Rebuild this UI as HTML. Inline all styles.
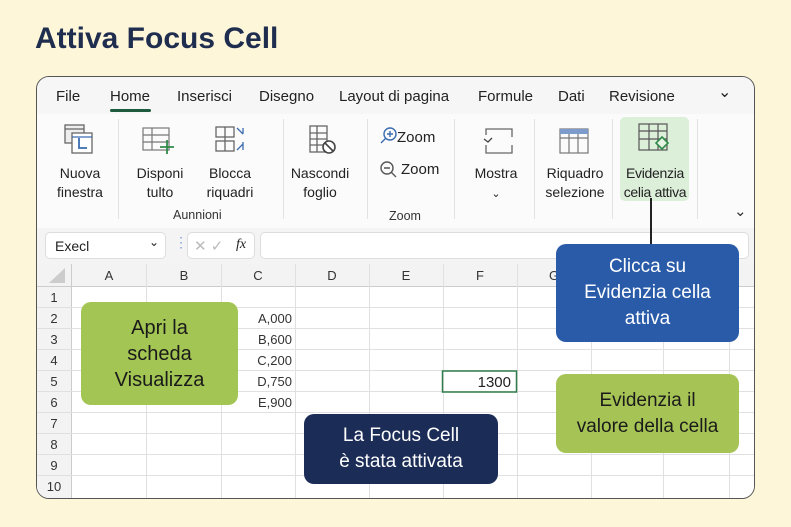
<!DOCTYPE html>
<html><head><meta charset="utf-8"><style>
*{margin:0;padding:0;box-sizing:border-box}
body{width:791px;height:527px;background:#fdf6d9;font-family:"Liberation Sans",sans-serif;position:relative;overflow:hidden;color:#222}
.abs{position:absolute}
h1{position:absolute;left:35px;top:22px;font-size:30px;font-weight:bold;color:#1f2d4f}
.win{position:absolute;left:36px;top:76px;width:719px;height:423px;background:#fff;border:1.5px solid #555;border-radius:13px;overflow:hidden}
.tabs{position:absolute;left:0;top:0;width:100%;height:37px;background:#f6f6f6}
.tab{position:absolute;top:11px;font-size:15px;color:#222}
.ribbon{position:absolute;left:0;top:37px;width:100%;height:114px;background:#fbfbfb}
.lbl{position:absolute;font-size:14px;text-align:center;line-height:19px;color:#222}
.sep{position:absolute;top:42px;width:1px;height:100px;background:#e2e2e2}
.grp{position:absolute;font-size:12.5px;color:#333}
.fbar{position:absolute;left:0;top:151px;width:100%;height:36px;background:#f4f4f4}
.box{position:absolute;background:#fff;border:1px solid #ddd;border-radius:5px}
.grid{position:absolute;left:0;top:187px;width:100%;height:236px;background:#fff}
.co{position:absolute;border-radius:10px;text-align:center;font-size:19px;line-height:26px;display:flex;align-items:center;justify-content:center}
</style></head><body>
<h1>Attiva Focus Cell</h1>
<div class="win">
 <div class="tabs">
  <span class="tab" style="left:19px">File</span>
  <span class="tab" style="left:73px">Home</span>
  <div class="abs" style="left:73px;top:32px;width:41px;height:3px;background:#1e5a3d;border-radius:2px"></div>
  <span class="tab" style="left:140px">Inserisci</span>
  <span class="tab" style="left:222px">Disegno</span>
  <span class="tab" style="left:302px">Layout di pagina</span>
  <span class="tab" style="left:441px">Formule</span>
  <span class="tab" style="left:521px">Dati</span>
  <span class="tab" style="left:572px">Revisione</span>
  <span class="tab" style="left:681px;top:5px;font-size:16px">&#8964;</span>
 </div>
 <div class="ribbon">
  <div class="abs" style="left:583px;top:3px;width:69px;height:84px;background:#dcefd9;border-radius:5px"></div>
  <!-- icons -->
  <svg class="abs" style="left:26px;top:9px" width="32" height="32" viewBox="0 0 32 32" fill="none" stroke="#666" stroke-width="1.3"><rect x="2" y="2" width="19" height="18" fill="#eee"/><line x1="2" y1="6" x2="21" y2="6"/><rect x="9" y="10" width="20" height="20" fill="#fff"/><path d="M16 15v10h8" stroke="#3a6cb0" stroke-width="1.8"/><line x1="9" y1="14" x2="29" y2="14" stroke="#3a6cb0"/></svg>
  <svg class="abs" style="left:104px;top:12px" width="34" height="30" viewBox="0 0 34 30" fill="none" stroke="#777" stroke-width="1.2"><rect x="2" y="2" width="26" height="22"/><line x1="2" y1="9" x2="28" y2="9"/><line x1="2" y1="16" x2="28" y2="16"/><line x1="11" y1="2" x2="11" y2="24"/><path d="M26 14v14M19 21h14" stroke="#2f8a4a" stroke-width="1.8"/></svg>
  <svg class="abs" style="left:177px;top:10px" width="32" height="32" viewBox="0 0 32 32" fill="none" stroke="#666" stroke-width="1.3"><rect x="2" y="3" width="18" height="10"/><rect x="2" y="17" width="18" height="10"/><line x1="11" y1="3" x2="11" y2="27"/><path d="M23 4l6 6M29 4v6" stroke="#3a6cb0"/><path d="M23 26l6-6M29 26v-8" stroke="#3a6cb0"/></svg>
  <svg class="abs" style="left:270px;top:10px" width="32" height="32" viewBox="0 0 32 32" fill="none" stroke="#666" stroke-width="1.3"><rect x="3" y="2" width="17" height="26"/><line x1="3" y1="9" x2="20" y2="9"/><line x1="3" y1="15" x2="20" y2="15"/><line x1="3" y1="21" x2="20" y2="21"/><line x1="10" y1="2" x2="10" y2="28"/><circle cx="22" cy="23" r="6" fill="#fff" stroke="#444" stroke-width="1.6"/><line x1="18" y1="19" x2="26" y2="27" stroke="#444" stroke-width="1.6"/></svg>
  <svg class="abs" style="left:342px;top:12px" width="20" height="20" viewBox="0 0 20 20" fill="none" stroke="#3a6cb0" stroke-width="1.4"><circle cx="11" cy="8" r="6"/><path d="M11 5v6M8 8h6M7 12l-5 5"/></svg>
  <span class="lbl" style="left:360px;top:14px;font-size:15px">Zoom</span>
  <svg class="abs" style="left:342px;top:46px" width="20" height="20" viewBox="0 0 20 20" fill="none" stroke="#555" stroke-width="1.4"><circle cx="8" cy="8" r="6"/><path d="M5 8h6M12 12l5 5"/></svg>
  <span class="lbl" style="left:364px;top:46px;font-size:15px">Zoom</span>
  <svg class="abs" style="left:445px;top:13px" width="32" height="28" viewBox="0 0 32 28" fill="none" stroke="#666" stroke-width="1.3"><path d="M4 8V2h26v8M4 18v8h26v-8"/><path d="M2 12l4 3 4-4" stroke="#444"/></svg>
  <svg class="abs" style="left:522px;top:13px" width="30" height="28" viewBox="0 0 30 28" fill="none" stroke="#777" stroke-width="1.2"><rect x="1" y="2" width="28" height="24"/><rect x="1" y="2" width="28" height="5" fill="#7d9ccc" stroke="none"/><line x1="1" y1="11" x2="29" y2="11"/><line x1="10" y1="7" x2="10" y2="26"/><line x1="19" y1="7" x2="19" y2="26"/></svg>
  <svg class="abs" style="left:600px;top:8px" width="34" height="32" viewBox="0 0 34 32" fill="none" stroke="#555" stroke-width="1.2"><rect x="2" y="2" width="28" height="26"/><line x1="2" y1="9" x2="30" y2="9"/><line x1="2" y1="17" x2="30" y2="17"/><line x1="12" y1="2" x2="12" y2="28"/><line x1="21" y1="2" x2="21" y2="28"/><path d="M25 15l6 6-6 6-6-6z" fill="#e6f3e3" stroke="#2f8a4a" stroke-width="1.6"/></svg>
  <span class="lbl" style="left:8px;top:50px;width:70px">Nuova<br>finestra</span>
  <span class="lbl" style="left:88px;top:50px;width:70px">Disponi<br>tulto</span>
  <span class="lbl" style="left:158px;top:50px;width:70px">Blocca<br>riquadri</span>
  <span class="lbl" style="left:248px;top:50px;width:70px">Nascondi<br>foglio</span>
  <span class="lbl" style="left:424px;top:50px;width:70px">Mostra<br><span style="font-size:11px">&#8964;</span></span>
  <span class="lbl" style="left:498px;top:50px;width:80px">Riquadro<br>selezione</span>
  <span class="lbl" style="left:579px;top:50px;width:78px;letter-spacing:-0.3px">Evidenzia<br>celia attiva</span>
  <span class="grp" style="left:136px;top:94px">Aunnioni</span>
  <span class="grp" style="left:352px;top:95px">Zoom</span>
  <span class="grp" style="left:697px;top:88px;font-size:15px">&#8964;</span>
 </div>
 <div class="sep" style="left:81px"></div><div class="sep" style="left:246px"></div><div class="sep" style="left:330px"></div><div class="sep" style="left:417px"></div><div class="sep" style="left:497px"></div><div class="sep" style="left:575px"></div><div class="sep" style="left:660px"></div>
 <div class="fbar">
  <div class="box" style="left:8px;top:4px;width:121px;height:27px"><span class="abs" style="left:9px;top:5px;font-size:14px">Execl</span><span class="abs" style="left:103px;top:2px;font-size:12px">&#8964;</span></div>
  <span class="abs" style="left:137px;top:6px;color:#7fa3d6;font-size:14px">&#8942;</span>
  <div class="box" style="left:150px;top:4px;width:68px;height:27px"><span class="abs" style="left:6px;top:4px;color:#bbb;font-size:15px">&#10005; &#10003;</span><span class="abs" style="left:48px;top:4px;font-family:'Liberation Serif',serif;font-style:italic;font-size:14px">fx</span></div>
  <div class="box" style="left:223px;top:4px;width:489px;height:27px"></div>
 </div>
 <div class="grid">
  <svg class="abs" style="left:0;top:0" width="719" height="236">
   <rect x="0" y="0" width="719" height="22" fill="#f3f3f3"/>
   <rect x="0" y="0" width="34" height="236" fill="#f3f3f3"/>
   <path d="M28 4v15H12z" fill="#ccc"/>
   <g stroke="#e0e0e0" stroke-width="1">
    <line x1="0" y1="22.5" x2="719" y2="22.5" stroke="#ccc"/>
    <line x1="34.5" y1="0" x2="34.5" y2="236" stroke="#ccc"/>
    <line x1="109.5" y1="0" x2="109.5" y2="236"/><line x1="184.5" y1="0" x2="184.5" y2="236"/><line x1="258.5" y1="0" x2="258.5" y2="236"/><line x1="332.5" y1="0" x2="332.5" y2="236"/><line x1="406.5" y1="0" x2="406.5" y2="236"/><line x1="480.5" y1="0" x2="480.5" y2="236"/><line x1="554.5" y1="0" x2="554.5" y2="236"/><line x1="626.5" y1="0" x2="626.5" y2="236"/><line x1="692.5" y1="0" x2="692.5" y2="236"/>
    <line x1="0" y1="43.5" x2="719" y2="43.5"/><line x1="0" y1="64.5" x2="719" y2="64.5"/><line x1="0" y1="85.5" x2="719" y2="85.5"/><line x1="0" y1="106.5" x2="719" y2="106.5"/><line x1="0" y1="127.5" x2="719" y2="127.5"/><line x1="0" y1="148.5" x2="719" y2="148.5"/><line x1="0" y1="169.5" x2="719" y2="169.5"/><line x1="0" y1="190.5" x2="719" y2="190.5"/><line x1="0" y1="211.5" x2="719" y2="211.5"/>
   </g>
   <g font-family="Liberation Sans" font-size="13" fill="#333" text-anchor="middle">
    <text x="72" y="16">A</text><text x="147" y="16">B</text><text x="221" y="16">C</text><text x="295" y="16">D</text><text x="369" y="16">E</text><text x="443" y="16">F</text><text x="517" y="16">G</text>
    <text x="17" y="38">1</text><text x="17" y="59">2</text><text x="17" y="80">3</text><text x="17" y="101">4</text><text x="17" y="122">5</text><text x="17" y="143">6</text><text x="17" y="164">7</text><text x="17" y="185">8</text><text x="17" y="206">9</text><text x="17" y="227">10</text>
   </g>
   <g font-family="Liberation Sans" font-size="13" fill="#333" text-anchor="end">
    <text x="255" y="59">A,000</text><text x="255" y="80">B,600</text><text x="255" y="101">C,200</text><text x="255" y="122">D,750</text><text x="255" y="143">E,900</text>
   </g>
   <rect x="405.5" y="107" width="74" height="21" fill="none" stroke="#2f7d4a" stroke-width="1.5"/>
   <text x="474" y="123" font-family="Liberation Sans" font-size="15" fill="#222" text-anchor="end">1300</text>
  </svg>
 </div>
</div>
<div class="abs" style="left:650px;top:198px;width:2px;height:47px;background:#222"></div>
<div class="co" style="left:81px;top:302px;width:157px;height:103px;background:#a3c553;color:#1a1a1a;font-size:20px">Apri la<br>scheda<br>Visualizza</div>
<div class="co" style="left:304px;top:414px;width:194px;height:70px;background:#1b2d57;color:#fff">La Focus Cell<br>è stata attivata</div>
<div class="co" style="left:556px;top:244px;width:183px;height:98px;background:#2a5ba9;color:#fff">Clicca su<br>Evidenzia cella<br>attiva</div>
<div class="co" style="left:556px;top:374px;width:183px;height:79px;background:#a6c455;color:#1a1a1a">Evidenzia il<br>valore della cella</div>
</body></html>
